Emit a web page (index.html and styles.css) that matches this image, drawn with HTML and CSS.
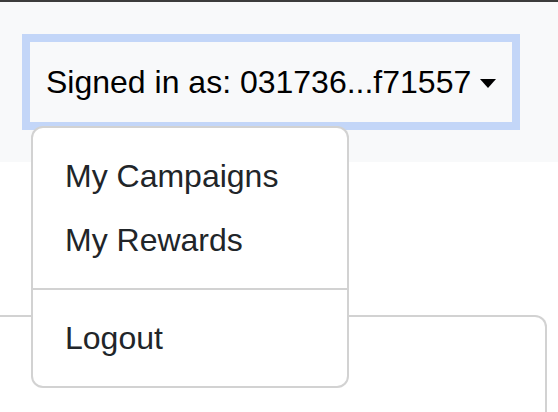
FILE: index.html
```html
<!DOCTYPE html>
<html lang="en">
<head>
<meta charset="utf-8">
<title>Account menu</title>
<link rel="stylesheet" href="styles.css">
</head>
<body>
<div class="page">
  <nav class="navbar">
    <div class="nav-item dropdown">
      <button class="dropdown-toggle" type="button">Signed in as: 031736...f71557<span class="caret"></span></button>
      <div class="dropdown-menu">
        <a class="dropdown-item" href="#">My Campaigns</a>
        <a class="dropdown-item" href="#">My Rewards</a>
        <hr class="dropdown-divider">
        <a class="dropdown-item" href="#">Logout</a>
      </div>
    </div>
  </nav>
  <main class="content">
    <div class="card"></div>
  </main>
</div>
</body>
</html>
```

FILE: styles.css
```css
html, body {
  margin: 0;
  padding: 0;
  background: #ffffff;
  overflow: hidden;
}

.page {
  width: 558px;
  height: 412px;
  border-top: 2px solid #3c3c3c;
  box-sizing: border-box;
  font-family: "Liberation Sans", Arial, Helvetica, sans-serif;
  overflow: hidden;
}

.navbar {
  background: #f8f9fa;
  height: 160px;
  padding: 40px 0 0 30px;
  box-sizing: border-box;
  display: flex;
  align-items: flex-start;
  position: relative;
  z-index: 2;
}

.nav-item {
  position: relative;
}

.dropdown-toggle {
  display: flex;
  align-items: center;
  background: #f8f9fa;
  border: 0;
  margin: 0;
  padding: 16px 16px 16px 16px;
  font-family: inherit;
  font-size: 32px;
  line-height: 48px;
  color: #000000;
  box-shadow: 0 0 0 8px rgb(195, 214, 248);
  cursor: pointer;
}

.caret {
  display: inline-block;
  width: 0;
  height: 0;
  margin-left: 9px;
  margin-top: 2px;
  border-top: 9px solid #000000;
  border-left: 8px solid transparent;
  border-right: 8px solid transparent;
}

.dropdown-menu {
  position: absolute;
  top: 100%;
  left: 1px;
  margin-top: 4px;
  width: 318px;
  box-sizing: border-box;
  background: #ffffff;
  border: 2px solid rgba(0, 0, 0, 0.175);
  border-radius: 12px;
  padding: 16px 0;
  display: flex;
  flex-direction: column;
}

.dropdown-item {
  display: block;
  padding: 8px 32px;
  font-size: 32px;
  line-height: 48px;
  color: #212529;
  text-decoration: none;
  white-space: nowrap;
}

.dropdown-divider {
  height: 0;
  margin: 16px 0;
  border: 0;
  border-top: 2px solid rgba(0, 0, 0, 0.175);
}

.content {
  padding-top: 153px;
}

.card {
  margin-left: -20px;
  width: 567px;
  height: 200px;
  box-sizing: border-box;
  border: 2px solid rgba(0, 0, 0, 0.175);
  border-radius: 12px;
  background: #ffffff;
}
```
